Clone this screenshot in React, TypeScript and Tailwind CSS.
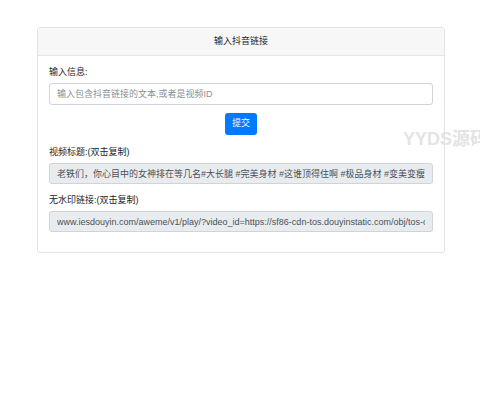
import type { FC } from 'react'

const FONT = 'font-["Liberation_Sans","Noto_Sans_CJK_SC",sans-serif]'

const VIDEO_TITLE = '老铁们，你心目中的女神排在等几名#大长腿 #完美身材 #这谁顶得住啊 #极品身材 #变美变瘦实用'
const VIDEO_URL =
  'www.iesdouyin.com/aweme/v1/play/?video_id=https://sf86-cdn-tos.douyinstatic.com/obj/tos-cn-ve-15/abc'

/** 只读输出框（双击复制）。 */
const ResultField: FC<{ label: string; value: string }> = ({ label, value }) => (
  <div className="flex flex-col gap-[5px]">
    <label className="h-[12px] text-[9px] leading-[12px] text-[#212529]">{label}</label>
    <input
      readOnly
      value={value}
      className="h-[21px] w-full rounded-[3px] border border-[#ced4da] bg-[#e9ecef] px-[7px] text-[9px] text-[#495057] outline-none"
    />
  </div>
)

export default function App() {
  return (
    <div className={`relative h-[400px] w-[480px] overflow-hidden bg-white ${FONT}`}>
      <div className="ml-[37px] mt-[27px] w-[408px] rounded-[3px] border border-[#e3e3e3] bg-white">
        <div className="flex h-[28px] items-center justify-center border-b border-[#e6e6e6] bg-[#f7f7f7] text-[9px] text-[#212529]">
          输入抖音链接
        </div>

        <div className="flex flex-col px-[11px] pt-[10px] pb-[20px]">
          <label className="h-[12px] text-[9px] leading-[12px] text-[#212529]">输入信息:</label>
          <input
            placeholder="输入包含抖音链接的文本,或者是视频ID"
            className="mt-[5px] h-[22px] w-full rounded-[3px] border border-[#ced4da] bg-white px-[7px] text-[9px] text-[#495057] outline-none placeholder:text-[#8a9096]"
          />

          <div className="mt-[8px] flex justify-center">
            <button
              type="button"
              className="h-[22px] w-[32px] rounded-[3px] bg-[#007bff] text-[9px] text-white"
            >
              提交
            </button>
          </div>

          <div className="mt-[11px] flex flex-col gap-[10px]">
            <ResultField label="视频标题:(双击复制)" value={VIDEO_TITLE} />
            <ResultField label="无水印链接:(双击复制)" value={VIDEO_URL} />
          </div>
        </div>
      </div>

      <div className="pointer-events-none absolute left-[403px] top-[126px] whitespace-nowrap text-[18px] font-bold text-[#e4e4e4]">
        YYDS源码
      </div>
    </div>
  )
}
